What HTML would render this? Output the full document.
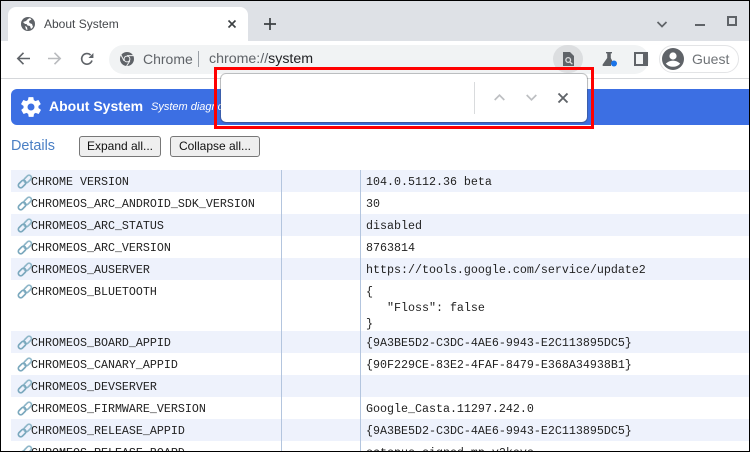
<!DOCTYPE html>
<html><head><meta charset="utf-8"><style>
*{box-sizing:border-box}
html,body{margin:0;padding:0;width:750px;height:452px;overflow:hidden;background:#fff}
body{position:relative;font-family:"Liberation Sans",sans-serif}
.a{position:absolute}
.t{position:absolute;white-space:pre;line-height:16px}
.row{position:absolute;left:11px;width:739px;height:22px}
.blue{background:#eef2fc}
.k,.v{position:absolute;font:11.67px/16px "Liberation Mono",monospace;color:#222;white-space:pre}
.k{left:31px}.v{left:366px}
.btn{position:absolute;top:136px;height:21px;border:1px solid #777;border-radius:3px;background:#efefef;font-size:12px;line-height:19px;text-align:center;color:#111}
svg{position:absolute;overflow:visible}
</style></head><body>
<svg width="0" height="0"><defs>
<g id="lk" fill="none"><rect x="6.400" y="2.600" width="8.600" height="4.800" rx="2.400" transform="rotate(-45 10.700 5)" stroke="#8fb7c9" stroke-width="1.700"/><rect x="0.800" y="7.600" width="8.600" height="4.800" rx="2.400" transform="rotate(-45 5.100 10)" stroke="#7aa8bd" stroke-width="1.700"/></g>
</defs></svg>

<!-- tab strip -->
<div class="a" style="left:0;top:0;width:750px;height:41px;background:#dee1e6"></div>
<div class="a" style="left:8px;top:7px;width:240px;height:36px;background:#fff;border-radius:8px 8px 0 0"></div>
<div class="a" style="left:0;top:41px;width:750px;height:38px;background:#fff"></div>
<div class="a" style="left:0;top:78px;width:750px;height:1px;background:#d5d7da"></div>
<svg style="left:21px;top:17px" width="14" height="14" viewBox="0 0 14 14"><circle cx="7" cy="7" r="7" fill="#5f6368"/><path d="M2 5 L5 4 L7 2 L9 1 L10.5 2.5 L8 4 L8.5 6 L11 7 L12 10 L10 12 L9 9 L6.5 8.5 L5.5 7 L4 7 Z M4 9 L6 10 L6.5 13 L5 12.4 Z" fill="#fff"/></svg>
<div class="t" style="left:44px;top:16px;font-size:12px;color:#45484c">About System</div>
<svg style="left:228px;top:20px" width="8" height="8"><path d="M0.5 .5L7.500 7.500M7.500 .5L.5 7.500" stroke="#3c4043" stroke-width="1.600"/></svg>
<svg style="left:264px;top:18px" width="12" height="12"><path d="M6 0V12M0 6H12" stroke="#3c4043" stroke-width="1.700"/></svg>
<svg style="left:657px;top:21px" width="10" height="7"><path d="M.5 1L5 5.500L9.500 1" fill="none" stroke="#5f6368" stroke-width="1.700"/></svg>
<div class="a" style="left:695px;top:24px;width:10px;height:2px;background:#5f6368"></div>
<div class="a" style="left:727px;top:16px;width:10px;height:10px;border:2px solid #5f6368"></div>

<!-- toolbar -->
<svg style="left:16px;top:52px" width="14" height="13"><path d="M14 6.500H2M7.500 .8L1.800 6.500L7.500 12.200" fill="none" stroke="#5f6368" stroke-width="1.600"/></svg>
<svg style="left:48px;top:52px" width="14" height="13"><path d="M0 6.500H12M6.500 .8L12.200 6.500L6.500 12.200" fill="none" stroke="#b9bbbe" stroke-width="1.600"/></svg>
<svg style="left:80px;top:52px" width="14" height="14" viewBox="0 0 14 14"><path d="M12 8.500A5.300 5.300 0 1 1 10.600 3" fill="none" stroke="#5f6368" stroke-width="1.600"/><path d="M13.400 1V6H8.400Z" fill="#5f6368"/></svg>
<div class="a" style="left:109px;top:45px;width:540px;height:29px;border-radius:14.500px;background:#f1f3f4"></div>
<svg style="left:120px;top:52px" width="14" height="14" viewBox="0 0 14 14"><circle cx="7" cy="7" r="7" fill="#5f6368"/><circle cx="7" cy="7" r="3.400" fill="#f1f3f4"/><circle cx="7" cy="7" r="2.400" fill="#5f6368"/><path d="M7 3.600H13.400M4 8.800L1 3M9.800 9L6.600 14" stroke="#f1f3f4" stroke-width="1"/></svg>
<div class="t" style="left:143px;top:51px;font-size:14px;color:#5f6368">Chrome</div>
<div class="a" style="left:198px;top:51px;width:1px;height:16px;background:#9aa0a6"></div>
<div class="t" style="left:209px;top:51px;font-size:14.200px;color:#5f6368">chrome://<span style="color:#202124">system</span></div>
<div class="a" style="left:553px;top:45px;width:30px;height:28px;border-radius:15px;background:#dcdee0"></div>
<svg style="left:562px;top:52px" width="12" height="14" viewBox="0 0 12 14"><path d="M1 0H8L12 4V14H1Z" fill="#5f6368"/><circle cx="6.200" cy="8" r="3" fill="#dcdee0"/><circle cx="6.200" cy="8" r="1.700" fill="#5f6368"/><path d="M8 10L10.400 12.200" stroke="#dcdee0" stroke-width="1.300"/></svg>
<svg style="left:602px;top:52px" width="16" height="15" viewBox="0 0 16 15"><path d="M4 0H10V1.400H8.800V6L11 10.400A3.600 3.600 0 0 0 9 14H1.400Q0 13.800 .8 12.200L5.200 6V1.400H4Z" fill="#5f6368"/><circle cx="12" cy="11.500" r="3" fill="#1a73e8"/></svg>
<div class="a" style="left:634px;top:52px;width:14px;height:14px;border:2px solid #5f6368;border-right-width:5px"></div>
<div class="a" style="left:659px;top:45px;width:80px;height:28px;border:1px solid #e3e4e6;border-radius:14px;background:#fff"></div>
<svg style="left:662px;top:48px" width="22" height="22" viewBox="0 0 22 22"><circle cx="11" cy="11" r="11" fill="#5f6368"/><circle cx="11" cy="8" r="3.600" fill="#fff"/><path d="M3.800 15.600Q7 12.600 11 12.600T18.200 15.600Q15.400 18.800 11 18.800T3.800 15.600Z" fill="#fff"/></svg>
<div class="t" style="left:692px;top:51px;font-size:14px;color:#6f7377">Guest</div>

<!-- header -->
<div class="a" style="left:11px;top:89px;width:739px;height:36px;background:#3c6fe3;border-radius:6px 0 0 6px"></div>
<svg style="left:19px;top:95px" width="24" height="24" viewBox="0 0 24 24"><path fill="#fff" d="M19.400 13c0-.3.1-.6.1-1s0-.7-.1-1l2.100-1.600c.2-.2.2-.4.1-.6l-2-3.500c-.1-.2-.4-.3-.6-.2l-2.500 1c-.5-.4-1.100-.7-1.700-1l-.4-2.600c0-.2-.2-.4-.5-.4h-4c-.3 0-.5.2-.5.4l-.4 2.600c-.6.3-1.200.6-1.700 1l-2.500-1c-.2-.1-.5 0-.6.2l-2 3.500c-.1.2-.1.4.1.6L4.600 11c0 .3-.1.7-.1 1s0 .7.1 1l-2.100 1.600c-.2.2-.2.4-.1.6l2 3.500c.1.2.4.3.6.2l2.500-1c.5.4 1.100.7 1.700 1l.4 2.600c0 .2.2.4.5.4h4c.3 0 .5-.2.5-.4l.4-2.600c.6-.3 1.200-.6 1.700-1l2.500 1c.2.1.5 0 .6-.2l2-3.500c.1-.2.1-.4-.1-.6L19.400 13zM12 15.500a3.500 3.500 0 1 1 0-7 3.500 3.500 0 0 1 0 7z"/></svg>
<div class="t" style="left:49px;top:98px;font-size:14px;font-weight:bold;color:#fff">About System</div>
<div class="t" style="left:151px;top:99px;font-size:11px;font-style:italic;color:#fff">System diagnostics</div>

<!-- details -->
<div class="t" style="left:11px;top:138px;font-size:14.400px;color:#4a7fc4">Details</div>
<div class="btn" style="left:79px;width:82px">Expand all...</div>
<div class="btn" style="left:170px;width:90px">Collapse all...</div>

<!-- rows -->
<div class="row blue" style="top:170px"></div>
<div class="row blue" style="top:214px"></div>
<div class="row blue" style="top:258px"></div>
<div class="row blue" style="top:331px"></div>
<div class="row blue" style="top:375px"></div>
<div class="row blue" style="top:419px"></div>
<div class="a" style="left:281px;top:170px;width:1px;height:282px;background:#b3c5de"></div>
<div class="a" style="left:360px;top:170px;width:1px;height:282px;background:#b3c5de"></div>

<svg style="left:17px;top:174px" width="15" height="15" viewBox="0 0 15 15"><use href="#lk"/></svg>
<svg style="left:17px;top:196px" width="15" height="15" viewBox="0 0 15 15"><use href="#lk"/></svg>
<svg style="left:17px;top:218px" width="15" height="15" viewBox="0 0 15 15"><use href="#lk"/></svg>
<svg style="left:17px;top:240px" width="15" height="15" viewBox="0 0 15 15"><use href="#lk"/></svg>
<svg style="left:17px;top:262px" width="15" height="15" viewBox="0 0 15 15"><use href="#lk"/></svg>
<svg style="left:17px;top:284px" width="15" height="15" viewBox="0 0 15 15"><use href="#lk"/></svg>
<svg style="left:17px;top:335px" width="15" height="15" viewBox="0 0 15 15"><use href="#lk"/></svg>
<svg style="left:17px;top:357px" width="15" height="15" viewBox="0 0 15 15"><use href="#lk"/></svg>
<svg style="left:17px;top:379px" width="15" height="15" viewBox="0 0 15 15"><use href="#lk"/></svg>
<svg style="left:17px;top:401px" width="15" height="15" viewBox="0 0 15 15"><use href="#lk"/></svg>
<svg style="left:17px;top:423px" width="15" height="15" viewBox="0 0 15 15"><use href="#lk"/></svg>
<svg style="left:17px;top:445px" width="15" height="15" viewBox="0 0 15 15"><use href="#lk"/></svg>

<div class="k" style="top:174px">CHROME VERSION</div><div class="v" style="top:174px">104.0.5112.36 beta</div>
<div class="k" style="top:196px">CHROMEOS_ARC_ANDROID_SDK_VERSION</div><div class="v" style="top:196px">30</div>
<div class="k" style="top:218px">CHROMEOS_ARC_STATUS</div><div class="v" style="top:218px">disabled</div>
<div class="k" style="top:240px">CHROMEOS_ARC_VERSION</div><div class="v" style="top:240px">8763814</div>
<div class="k" style="top:262px">CHROMEOS_AUSERVER</div><div class="v" style="top:262px">https://tools.google.com/service/update2</div>
<div class="k" style="top:284px">CHROMEOS_BLUETOOTH</div><div class="v" style="top:284px">{
   "Floss": false
}</div>
<div class="k" style="top:335px">CHROMEOS_BOARD_APPID</div><div class="v" style="top:335px">{9A3BE5D2-C3DC-4AE6-9943-E2C113895DC5}</div>
<div class="k" style="top:357px">CHROMEOS_CANARY_APPID</div><div class="v" style="top:357px">{90F229CE-83E2-4FAF-8479-E368A34938B1}</div>
<div class="k" style="top:379px">CHROMEOS_DEVSERVER</div>
<div class="k" style="top:401px">CHROMEOS_FIRMWARE_VERSION</div><div class="v" style="top:401px">Google_Casta.11297.242.0</div>
<div class="k" style="top:423px">CHROMEOS_RELEASE_APPID</div><div class="v" style="top:423px">{9A3BE5D2-C3DC-4AE6-9943-E2C113895DC5}</div>
<div class="k" style="top:445px">CHROMEOS_RELEASE_BOARD</div><div class="v" style="top:445px">octopus-signed-mp-v2keys</div>

<!-- find bar -->
<div class="a" style="left:221px;top:74px;width:366px;height:48px;background:#fff;border-radius:5px;box-shadow:0 0 0 1px rgba(60,64,67,.28),0 1px 2px rgba(60,64,67,.3)"></div>
<div class="a" style="left:474px;top:82px;width:1px;height:32px;background:#d9dbdd"></div>
<svg style="left:494px;top:94px" width="11" height="7"><path d="M.7 6L5.500 1.200L10.300 6" fill="none" stroke="#bdbfc2" stroke-width="1.700"/></svg>
<svg style="left:526px;top:94px" width="11" height="7"><path d="M.7 1L5.500 5.800L10.300 1" fill="none" stroke="#bdbfc2" stroke-width="1.700"/></svg>
<svg style="left:558px;top:93px" width="10" height="10"><path d="M.5 .5L9.500 9.500M9.500 .5L.5 9.500" stroke="#5f6368" stroke-width="1.900"/></svg>

<!-- red annotation -->
<div class="a" style="left:214px;top:67px;width:380px;height:62px;border:3px solid #f00"></div>

<!-- outer frame -->
<div class="a" style="left:0;top:0;width:750px;height:1px;background:#000"></div>
<div class="a" style="left:0;top:0;width:1px;height:452px;background:#000"></div>
<div class="a" style="right:0;top:0;width:1px;height:452px;background:#000"></div>
<div class="a" style="left:0;top:451px;width:750px;height:1px;background:#000"></div>
</body></html>
